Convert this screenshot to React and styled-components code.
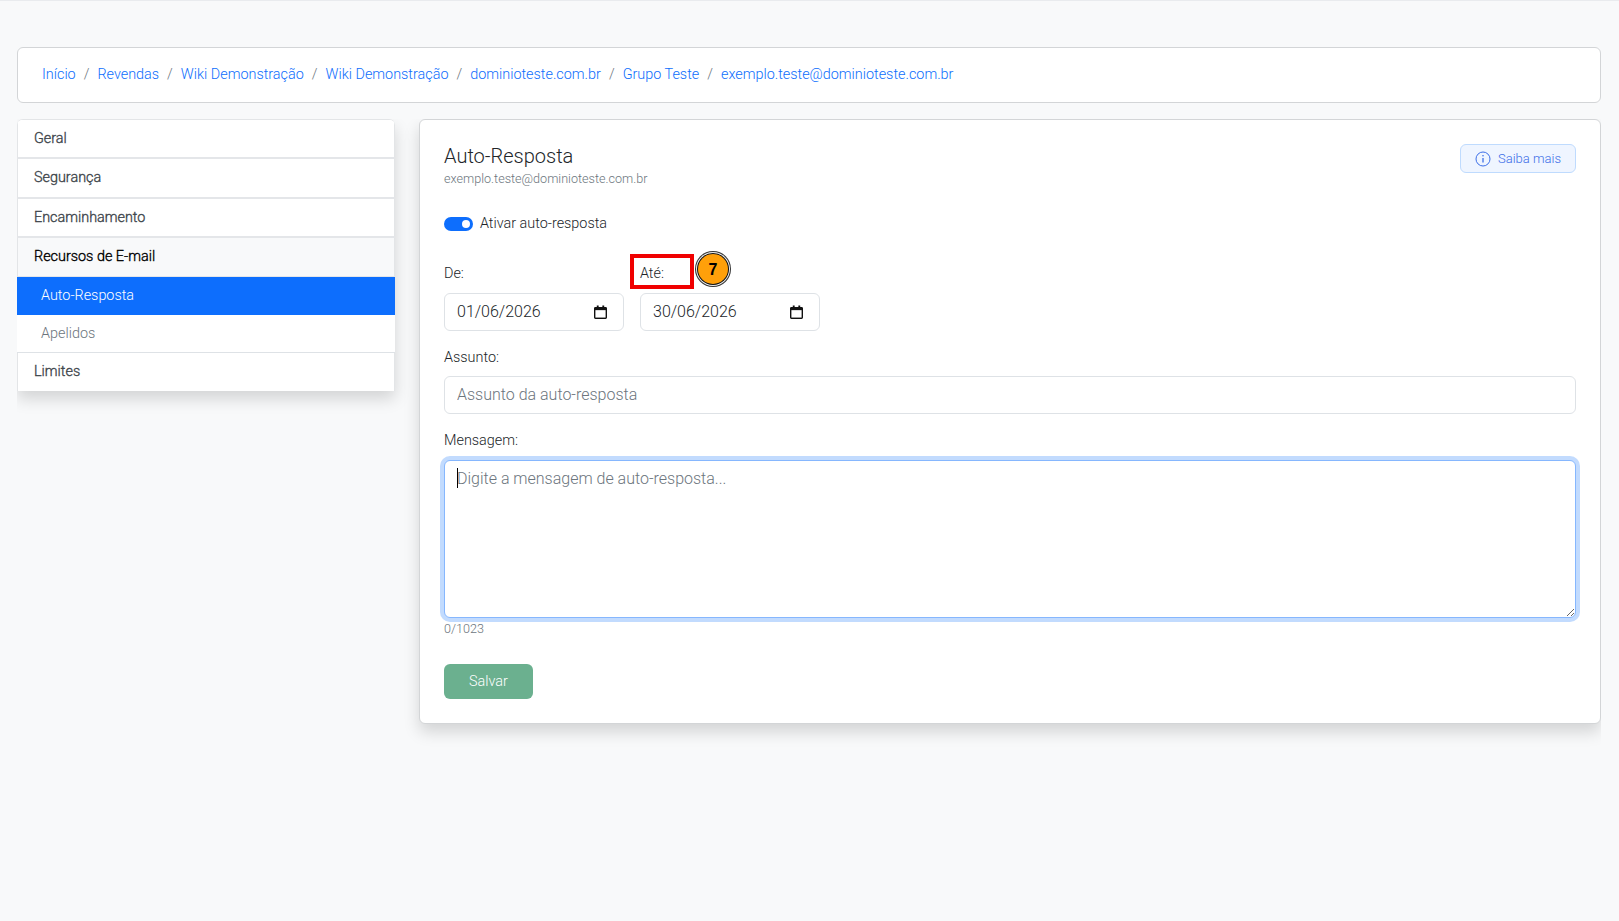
import React from "react";
import styled, { createGlobalStyle } from "styled-components";

const Global = createGlobalStyle`
  html, body { margin: 0; padding: 0; background: #f8f9fa; }
  body { font-family: Roboto, "Liberation Sans", sans-serif; font-size: 14.4px; font-weight: 300; color: #212529; }
  * { box-sizing: border-box; }
`;

const Page = styled.div`
  min-height: 921px;
  padding: 47px 18px 0 17px;
  border-top: 1px solid #e9ebee;
`;

const Breadcrumb = styled.nav`
  height: 56px;
  margin-top: -1px;
  padding: 0 24px 2px;
  display: flex;
  align-items: center;
  background: #fff;
  border: 1px solid #d3d5d7;
  border-radius: 6px;
`;

const Crumb = styled.a`
  color: #0d6efd;
  font-size: 14.4px;
  text-decoration: none;
`;

const Sep = styled.span`
  color: #6c757d;
  padding: 0 8px;
`;

const Columns = styled.div`
  display: flex;
  align-items: flex-start;
  gap: 24px;
  margin-top: 16px;
  padding-bottom: 40px;
  overflow: hidden;
`;

const Sidebar = styled.aside`
  width: 378px;
  flex: none;
  background: #fff;
  border-radius: 6px 6px 0 0;
  box-shadow: 0 8px 16px rgba(0, 0, 0, 0.15);
  border-top: 1px solid #e3e5e7;
  overflow: hidden;
`;

const NavRow = styled.div`
  height: ${(p) => p.$h}px;
  display: flex;
  align-items: center;
  padding: 0 0 ${(p) => (p.$lift ? 2 : 0)}px 15px;
  margin: 0;
  font-size: 14.4px;
  font-weight: 300;
  text-indent: 1px;
  -webkit-text-stroke: 0.35px ${(p) => (p.$open ? "#000" : "#40464c")};
  color: ${(p) => (p.$open ? "#000" : "#40464c")};
  background: ${(p) => (p.$open ? "#f8f9fa" : "#fff")};
  border: 1px solid #e3e5e7;
  border-width: 0 1px;
  border-bottom: ${(p) => (p.$last ? "none" : p.$open ? "1px solid #e4e6e9" : "2px solid #e4e6e9")};
`;

const SubRow = styled.div`
  height: ${(p) => p.$h}px;
  display: flex;
  align-items: center;
  padding: 0 0 ${(p) => (p.$active ? 2 : 1)}px 24px;
  font-size: 14.4px;
  color: ${(p) => (p.$active ? "#fff" : "#6c757d")};
  background: ${(p) => (p.$active ? "#0d6efd" : "#fff")};
  border-bottom: ${(p) => (p.$active ? "none" : "1px solid #dee2e6")};
`;

const Main = styled.main`
  flex: 1;
  height: 605px;
  padding: 24px;
  background: #fff;
  border: 1px solid #d3d5d7;
  border-radius: 6px;
  box-shadow: 0 8px 16px rgba(0, 0, 0, 0.15);
`;

const Header = styled.header`
  display: flex;
  justify-content: space-between;
  align-items: flex-start;
  height: 68px;
`;

const Title = styled.h1`
  margin: 0 0 2px;
  font-size: 20px;
  line-height: 24px;
  font-weight: 300;
`;

const Subtitle = styled.div`
  font-size: 12.6px;
  line-height: 18px;
  color: #6c757d;
`;

const HelpButton = styled.button`
  width: 116px;
  height: 29px;
  display: flex;
  align-items: center;
  justify-content: center;
  gap: 7px;
  font-family: inherit;
  font-size: 13px;
  font-weight: 300;
  color: #3d6fe8;
  background: #eff5ff;
  border: 1px solid #bfdbfe;
  border-radius: 6px;
`;

const ToggleRow = styled.div`
  display: flex;
  align-items: center;
  gap: 7px;
  height: 20px;
  margin-top: 2px;
`;

const ToggleText = styled.span`
  margin-top: -2px;
`;

const Toggle = styled.span`
  width: 29px;
  height: 14px;
  display: flex;
  align-items: center;
  justify-content: flex-end;
  padding-right: 3px;
  background: #0d6efd;
  border-radius: 7px;
`;

const Knob = styled.span`
  width: 8px;
  height: 8px;
  background: #fff;
  border-radius: 50%;
`;

const DateRow = styled.div`
  display: flex;
  gap: 16px;
  margin-top: 29px;
`;

const DateCol = styled.div`
  position: relative;
  width: 180px;
`;

const Label = styled.label`
  display: block;
  font-size: 14.4px;
  line-height: 21px;
  margin-bottom: ${(p) => p.$gap || 8}px;
`;

const DateBox = styled.div`
  height: 38px;
  display: flex;
  align-items: center;
  justify-content: space-between;
  padding: 0 16px 2px 12px;
  font-size: 16px;
  color: #212529;
  background: #fff;
  border: 1px solid #dee2e6;
  border-radius: 6px;
`;

const CalendarSvg = styled.svg`
  margin-top: 2px;
`;

const Highlight = styled.span`
  position: absolute;
  left: -10px;
  top: -9px;
  width: 64px;
  height: 35px;
  border: 4px solid #f00000;
`;

const Badge = styled.span`
  position: absolute;
  left: 58px;
  top: -9px;
  width: 30px;
  height: 30px;
  padding-top: 1px;
  display: flex;
  align-items: center;
  justify-content: center;
  font-family: "Liberation Sans", sans-serif;
  font-size: 16px;
  font-weight: 700;
  color: #000;
  background: #ffa00a;
  border-radius: 50%;
  box-shadow: 0 0 0 1px #111, 0 0 0 2px #eee, 0 0 0 3px #333;
`;

const Field = styled.div`
  margin-top: ${(p) => p.$top}px;
`;

const TextInput = styled.input`
  display: block;
  width: 100%;
  height: 38px;
  padding: 0 12px 2px;
  font-family: inherit;
  font-size: 16px;
  font-weight: 300;
  background: #fff;
  border: 1px solid #dee2e6;
  border-radius: 6px;
  outline: none;
  &::placeholder { color: #6c757d; opacity: 1; }
`;

const AreaWrap = styled.div`
  position: relative;
`;

const TextArea = styled.textarea`
  display: block;
  width: 100%;
  height: 158px;
  padding: 6px 12px;
  font-family: inherit;
  font-size: 16px;
  line-height: 24px;
  font-weight: 300;
  background: #fff;
  border: 1px solid #86b7fe;
  border-radius: 6px;
  outline: none;
  box-shadow: 0 0 0 4px rgba(13, 110, 253, 0.25);
  resize: vertical;
  overflow: auto;
  &::placeholder { color: #6c757d; opacity: 1; }
`;

const Caret = styled.span`
  position: absolute;
  left: 13px;
  top: 8px;
  width: 1px;
  height: 20px;
  background: #000;
`;

const Counter = styled.div`
  font-size: 12.6px;
  line-height: 18px;
  color: #6c757d;
  margin-top: 2px;
`;

const SaveButton = styled.button`
  display: block;
  width: 89px;
  height: 35px;
  margin-top: 26px;
  font-family: inherit;
  font-size: 14.4px;
  font-weight: 300;
  color: #fff;
  background: #6bb08f;
  border: none;
  border-radius: 6px;
`;

const crumbs = ["Início", "Revendas", "Wiki Demonstração", "Wiki Demonstração", "dominioteste.com.br", "Grupo Teste", "exemplo.teste@dominioteste.com.br"];

const CalendarIcon = () => (
  <CalendarSvg width="13" height="14" viewBox="0 0 14 15" fill="none">
    <path d="M3 0.5h2v1.5h4V0.5h2V2h1.5A1.5 1.5 0 0 1 14 3.5v10a1.5 1.5 0 0 1-1.5 1.5h-11A1.5 1.5 0 0 1 0 13.5v-10A1.5 1.5 0 0 1 1.5 2H3z" fill="#111" />
    <rect x="1.5" y="5.5" width="11" height="8" fill="#fff" />
  </CalendarSvg>
);

const InfoIcon = () => (
  <svg width="16" height="16" viewBox="0 0 16 16" fill="none" stroke="#3d6fe8">
    <circle cx="8" cy="8" r="7" strokeWidth="1" />
    <path d="M8 7v4.5" strokeWidth="1.3" />
    <circle cx="8" cy="4.8" r="0.8" fill="#3d6fe8" stroke="none" />
  </svg>
);

export default function App() {
  return (
    <>
      <Global />
      <Page>
        <Breadcrumb>
          {crumbs.map((c, i) => (
            <React.Fragment key={i}>
              {i > 0 && <Sep>/</Sep>}
              <Crumb href="#">{c}</Crumb>
            </React.Fragment>
          ))}
        </Breadcrumb>
        <Columns>
          <Sidebar>
            <NavRow $h={39}>Geral</NavRow>
            <NavRow $h={40} $lift>Segurança</NavRow>
            <NavRow $h={39}>Encaminhamento</NavRow>
            <NavRow $h={39} $open $lift>Recursos de E-mail</NavRow>
            <SubRow $h={38} $active>Auto-Resposta</SubRow>
            <SubRow $h={38}>Apelidos</SubRow>
            <NavRow $h={38} $last $lift>Limites</NavRow>
          </Sidebar>
          <Main>
            <Header>
              <div>
                <Title>Auto-Resposta</Title>
                <Subtitle>exemplo.teste@dominioteste.com.br</Subtitle>
              </div>
              <HelpButton><InfoIcon />Saiba mais</HelpButton>
            </Header>
            <ToggleRow>
              <Toggle><Knob /></Toggle>
              <ToggleText>Ativar auto-resposta</ToggleText>
            </ToggleRow>
            <DateRow>
              <DateCol>
                <Label $gap={9}>De:</Label>
                <DateBox>01/06/2026<CalendarIcon /></DateBox>
              </DateCol>
              <DateCol>
                <Label $gap={9}>Até:</Label>
                <Highlight />
                <Badge>7</Badge>
                <DateBox>30/06/2026<CalendarIcon /></DateBox>
              </DateCol>
            </DateRow>
            <Field $top={16}>
              <Label>Assunto:</Label>
              <TextInput placeholder="Assunto da auto-resposta" />
            </Field>
            <Field $top={16}>
              <Label $gap={9}>Mensagem:</Label>
              <AreaWrap>
                <TextArea placeholder="Digite a mensagem de auto-resposta..." />
                <Caret />
              </AreaWrap>
            </Field>
            <Counter>0/1023</Counter>
            <SaveButton>Salvar</SaveButton>
          </Main>
        </Columns>
      </Page>
    </>
  );
}
